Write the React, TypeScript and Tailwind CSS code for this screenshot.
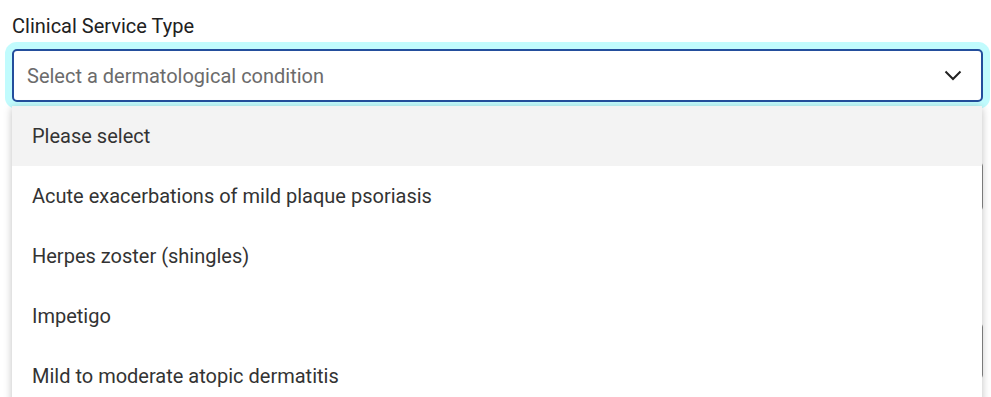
import React from "react";

const options = [
  "Please select",
  "Acute exacerbations of mild plaque psoriasis",
  "Herpes zoster (shingles)",
  "Impetigo",
  "Mild to moderate atopic dermatitis",
];

export default function App() {
  return (
    <div
      className="relative w-[991px] h-[397px] overflow-hidden bg-white"
      style={{ fontFamily: "Roboto, 'Liberation Sans', sans-serif" }}
    >
      <div className="flex flex-col pl-[12px] pr-[8px] pt-[14px]">
        <label className="text-[20px] leading-[24px] text-[#212121]">Clinical Service Type</label>
        <div className="relative mt-[11px]">
          <div className="flex h-[53px] items-center justify-between rounded-[5px] border-2 border-[#234e9c] bg-white pl-[13px] pr-[19px] shadow-[0_0_0_7px_#c1fbfd]">
            <span className="text-[20px] text-[#6b6b6b]">Select a dermatological condition</span>
            <svg width="18" height="11" viewBox="0 0 18 11" fill="none" className="-mt-[1px]">
              <path d="M1.5 1.5 L9 9 L16.5 1.5" stroke="#222222" strokeWidth="2" />
            </svg>
          </div>
          <div className="absolute left-0 right-[1px] top-[57px] z-10 flex flex-col bg-white shadow-[0_2px_8px_rgba(0,0,0,0.25)]">
            {options.map((o, i) => (
              <div
                key={o}
                className={`flex h-[60px] items-center pl-[20px] text-[20px] text-[#333333] ${i === 0 ? "bg-[#f3f3f3]" : "bg-white"}`}
              >
                {o}
              </div>
            ))}
          </div>
        </div>
        <div className="mt-[60px] h-[49px] rounded-[4px] border border-[#8a8a8a] bg-white" />
        <div className="mt-[112px] h-[56px] rounded-[4px] border border-[#8a8a8a] bg-white" />
      </div>
    </div>
  );
}
